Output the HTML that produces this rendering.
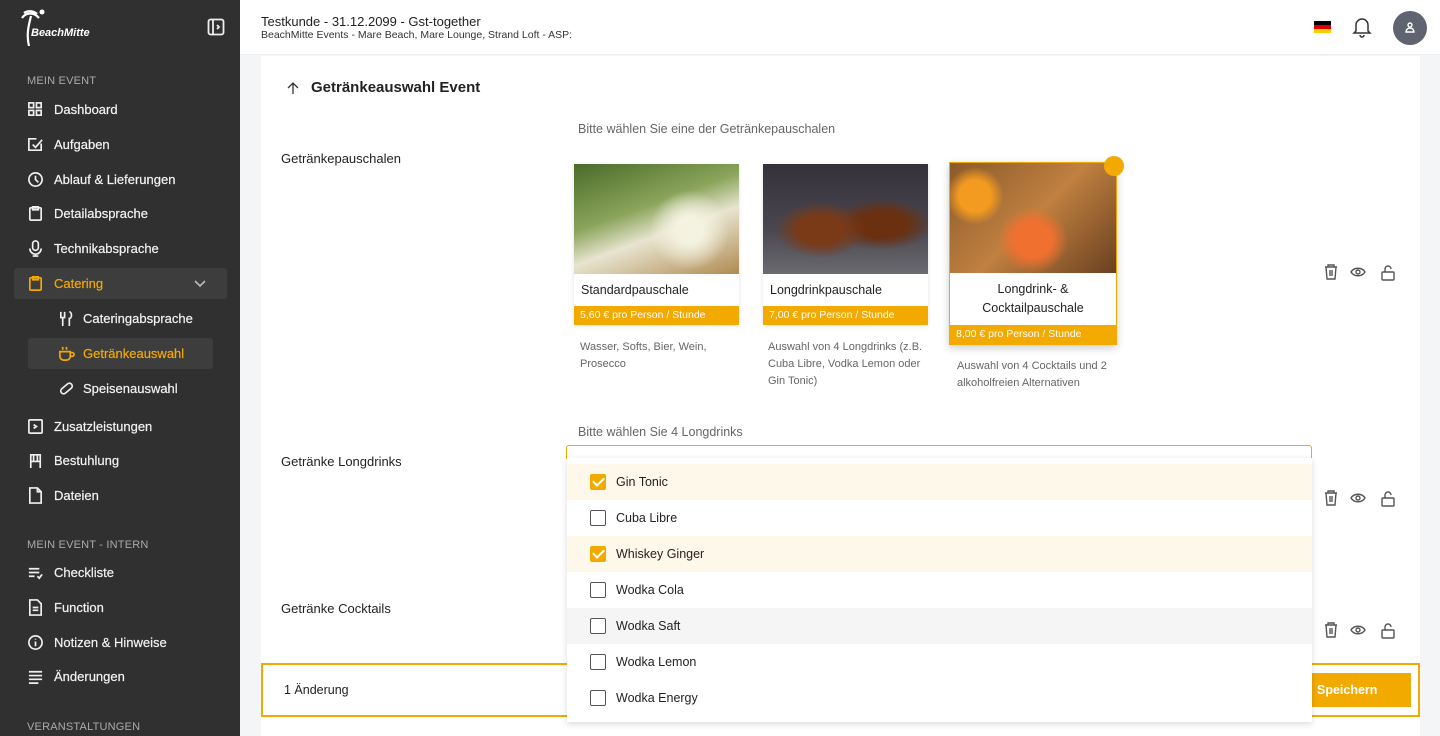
<!DOCTYPE html>
<html><head><meta charset="utf-8"><style>
*{box-sizing:border-box;margin:0;padding:0}
body{width:1440px;height:736px;overflow:hidden;background:#f3f5f7;font-family:"Liberation Sans",sans-serif;position:relative;color:#222}
.a{position:absolute}
#sb{left:0;top:0;width:240px;height:736px;background:#303030;color:#eee}
.sec{font-size:11px;color:#aaa;left:27px;letter-spacing:.2px}
.it{left:27px;font-size:13px;color:#f2f2f2;display:flex;align-items:center;gap:10px;-webkit-text-stroke:.2px #f2f2f2}
.it svg{width:17px;height:17px;stroke:#eee;fill:none;stroke-width:1.8}
.sub{left:58px;gap:8px}
#hd{left:240px;top:0;width:1200px;height:55px;background:#fff;border-bottom:1px solid #eee}
#card{left:261px;top:56px;width:1159px;height:680px;background:#fff}
.lbl{font-size:13px;color:#222}
.hint{font-size:12.5px;color:#666}
.pk{background:#fff;box-shadow:0 1px 4px rgba(0,0,0,.12)}
.pk .img{width:100%;height:110px}
.pk .t{font-size:12.5px;padding:0 7px;display:flex;align-items:center;height:32px}
.pk .p{background:#f2a900;color:#fff;font-size:10.5px;padding:0 6px;height:19px;line-height:19px}
.desc{font-size:11px;color:#666;line-height:17px}
.ico{stroke:#555;fill:none;stroke-width:1.4}
#dd{left:567px;top:458px;width:745px;height:264px;background:#fff;box-shadow:0 2px 6px rgba(0,0,0,.15)}
.row{height:36px;display:flex;align-items:center;padding-left:23px;font-size:12.5px;gap:10px}
.cb{width:16px;height:16px;border:1.5px solid #555;border-radius:2px;background:#fff}
.cb.on{background:#f2a900;border-color:#f2a900;position:relative}
.cb.on:after{content:"";position:absolute;left:4px;top:0px;width:5px;height:9px;border:solid #fff;border-width:0 2px 2px 0;transform:rotate(45deg)}
</style></head><body>
<div id="sb" class="a">
<div class="a" style="left:20px;top:8px;color:#fff;font-style:italic;font-weight:bold;font-size:11px"><svg width="26" height="38" viewBox="0 0 26 38" style="position:absolute;left:0;top:0" fill="none" stroke="#fff" stroke-width="2.2"><path d="M9 38 C6 26 9 16 11 8 M2 10 C6 4 14 4 19 10 M4 5 C8 2 14 3 17 6"/><circle cx="22" cy="4" r="2.5" fill="#fff" stroke="none"/></svg><span style="position:absolute;left:11px;top:19px;white-space:nowrap">BeachMitte</span></div>
<svg class="a" style="left:207px;top:18px" width="18" height="18" viewBox="0 0 18 18" fill="none" stroke="#eee" stroke-width="1.8"><rect x="1.5" y="1.5" width="15" height="15" rx="2"/><path d="M6 2v14M10 7l2 2-2 2"/></svg>
<div class="a sec" style="top:75px">MEIN EVENT</div>
<div class="a it" style="top:101px"><svg viewBox="0 0 18 18"><rect x="2" y="2" width="5" height="5"/><rect x="10" y="2" width="5" height="5"/><rect x="2" y="10" width="5" height="5"/><rect x="10" y="10" width="5" height="5"/></svg>Dashboard</div>
<div class="a it" style="top:136px"><svg viewBox="0 0 18 18"><path d="M15 8v7H2V3h8M6 9l3 3 7-8"/></svg>Aufgaben</div>
<div class="a it" style="top:171px"><svg viewBox="0 0 18 18"><circle cx="9" cy="9" r="7"/><path d="M9 5v4l3 3"/></svg>Ablauf &amp; Lieferungen</div>
<div class="a it" style="top:205px"><svg viewBox="0 0 18 18"><rect x="3" y="3" width="12" height="13" rx="1"/><path d="M6 2h6v3H6z"/></svg>Detailabsprache</div>
<div class="a it" style="top:240px"><svg viewBox="0 0 18 18"><rect x="6" y="1" width="6" height="10" rx="3"/><path d="M3 9a6 6 0 0012 0M9 15v2M6 17h6"/></svg>Technikabsprache</div>
<div class="a" style="left:14px;top:268px;width:213px;height:31px;background:#3d3d3d;border-radius:3px"></div>
<div class="a it" style="top:275px;color:#f2a900;-webkit-text-stroke:.2px #f2a900"><svg viewBox="0 0 18 18" style="stroke:#f2a900"><rect x="3" y="3" width="12" height="13" rx="1"/><path d="M6 2h6v3H6z"/></svg>Catering</div>
<svg class="a" style="left:194px;top:278px" width="12" height="10" viewBox="0 0 12 10" fill="none" stroke="#bbb" stroke-width="1.6"><path d="M1 3l5 5 5-5"/></svg>
<div class="a it sub" style="top:310px"><svg viewBox="0 0 18 18"><path d="M3 2v6h4V2M5 8v9M12 2c3 0 3 7 0 7v8"/></svg>Cateringabsprache</div>
<div class="a" style="left:28px;top:338px;width:185px;height:31px;background:#3d3d3d;border-radius:3px"></div>
<div class="a it sub" style="top:345px;color:#f2a900;-webkit-text-stroke:.2px #f2a900"><svg viewBox="0 0 18 18" style="stroke:#f2a900"><path d="M2 7h11v5a4 4 0 01-4 4H6a4 4 0 01-4-4zM13 8h2a2 2 0 010 4h-2M5 2v3M9 2v3"/></svg>Getränkeauswahl</div>
<div class="a it sub" style="top:380px"><svg viewBox="0 0 18 18"><rect x="2" y="6" width="14" height="6" rx="3" transform="rotate(-40 9 9)"/></svg>Speisenauswahl</div>
<div class="a it" style="top:418px"><svg viewBox="0 0 18 18"><rect x="2" y="2" width="14" height="14" rx="1"/><path d="M7 7l3 2-3 2"/></svg>Zusatzleistungen</div>
<div class="a it" style="top:452px"><svg viewBox="0 0 18 18"><path d="M4 17V3h10v14M4 10h10M7 3v7M11 3v7"/></svg>Bestuhlung</div>
<div class="a it" style="top:487px"><svg viewBox="0 0 18 18"><path d="M3 1h8l4 4v12H3zM11 1v4h4"/></svg>Dateien</div>
<div class="a sec" style="top:539px">MEIN EVENT - INTERN</div>
<div class="a it" style="top:564px"><svg viewBox="0 0 18 18"><path d="M2 5h11M2 9h11M2 13h6M11 13l2 2 3-4"/></svg>Checkliste</div>
<div class="a it" style="top:599px"><svg viewBox="0 0 18 18"><path d="M3 1h8l4 4v12H3zM6 9h6M6 12h6"/></svg>Function</div>
<div class="a it" style="top:634px"><svg viewBox="0 0 18 18"><circle cx="9" cy="9" r="7"/><path d="M9 8v5M9 5v1"/></svg>Notizen &amp; Hinweise</div>
<div class="a it" style="top:668px"><svg viewBox="0 0 18 18"><path d="M2 4h14M2 8h14M2 12h14M2 16h10"/></svg>Änderungen</div>
<div class="a sec" style="top:721px">VERANSTALTUNGEN</div>
</div>
<div id="hd" class="a">
<div class="a" style="left:21px;top:14px;font-size:13px">Testkunde - 31.12.2099 - Gst-together</div>
<div class="a" style="left:21px;top:29px;font-size:10.5px;color:#333">BeachMitte Events - Mare Beach, Mare Lounge, Strand Loft - ASP:</div>
<div class="a" style="left:1074px;top:21px;width:17px;height:12px;background:linear-gradient(#000 33%,#d00 33% 66%,#fc0 66%)"></div>
<svg class="a" style="left:1112px;top:16px" width="20" height="22" viewBox="0 0 20 22" fill="none" stroke="#333" stroke-width="1.5"><path d="M4 15V9a6 6 0 0112 0v6l2 2H2zM8 19a2 2 0 004 0"/></svg>
<div class="a" style="left:1153px;top:11px;width:34px;height:34px;border-radius:50%;background:#5f6470"></div>
<svg class="a" style="left:1164px;top:21px" width="12" height="12" viewBox="0 0 12 12" fill="none" stroke="#fff" stroke-width="1.4"><circle cx="6" cy="4" r="2"/><path d="M2 11a4 4 0 018 0z"/></svg>
</div>
<div id="card" class="a">
<svg class="a" style="left:25px;top:25px" width="14" height="14" viewBox="0 0 14 14" fill="none" stroke="#333" stroke-width="1.3"><path d="M7 13V2M2 7l5-5 5 5"/></svg>
<div class="a" style="left:50px;top:23px;font-size:15px;font-weight:bold;color:#222">Getränkeauswahl Event</div>
<div class="a hint" style="left:317px;top:66px">Bitte wählen Sie eine der Getränkepauschalen</div>
<div class="a lbl" style="left:20px;top:95px">Getränkepauschalen</div>
<div class="a pk" style="left:313px;top:108px;width:165px">
<div class="img" style="background:radial-gradient(circle at 70% 60%,#f4f2e0 10%,transparent 30%),linear-gradient(160deg,#4b6b2a,#8aa45a 40%,#e8e4d0 60%,#b08a50)"></div>
<div class="t">Standardpauschale</div><div class="p">5,60 € pro Person / Stunde</div></div>
<div class="a desc" style="left:319px;top:283px">Wasser, Softs, Bier, Wein,<br>Prosecco</div>
<div class="a pk" style="left:502px;top:108px;width:165px">
<div class="img" style="background:radial-gradient(ellipse at 35% 60%,#7a3a18 15%,transparent 30%),radial-gradient(ellipse at 72% 55%,#6a3010 15%,transparent 30%),linear-gradient(#35313a,#4b4750 60%,#6a6a70)"></div>
<div class="t">Longdrinkpauschale</div><div class="p">7,00 € pro Person / Stunde</div></div>
<div class="a desc" style="left:507px;top:283px">Auswahl von 4 Longdrinks (z.B.<br>Cuba Libre, Vodka Lemon oder<br>Gin Tonic)</div>
<div class="a pk" style="left:688px;top:106px;width:168px;border:1.5px solid #f2a900;box-shadow:0 3px 8px rgba(0,0,0,.2)">
<div class="img" style="background:radial-gradient(circle at 15% 30%,#f39a20 10%,transparent 18%),radial-gradient(ellipse at 50% 70%,#f07030 16%,transparent 30%),linear-gradient(135deg,#8a5a2a,#c08040 50%,#6a4020)"></div>
<div class="t" style="justify-content:center;text-align:center;height:52px;line-height:19px">Longdrink- &amp;<br>Cocktailpauschale</div><div class="p">8,00 € pro Person / Stunde</div></div>
<div class="a" style="left:843px;top:100px;width:20px;height:20px;border-radius:50%;background:#f2a900"></div>
<div class="a desc" style="left:696px;top:302px">Auswahl von 4 Cocktails und 2<br>alkoholfreien Alternativen</div>
<div class="a hint" style="left:317px;top:369px">Bitte wählen Sie 4 Longdrinks</div>
<div class="a" style="left:305px;top:389px;width:746px;height:14px;border:1.5px solid #f2a900;border-bottom:none;border-radius:3px 3px 0 0"></div>
<div class="a lbl" style="left:20px;top:398px">Getränke Longdrinks</div>
<div class="a lbl" style="left:20px;top:545px">Getränke Cocktails</div>
<div class="a" style="left:0;top:607px;width:1159px;height:54px;border:2px solid #f2a900;background:#fff"></div>
<div class="a" style="left:23px;top:627px;font-size:12.5px">1 Änderung</div>
<div class="a" style="left:1044px;top:617px;width:106px;height:34px;background:#f2a900;color:#fff;font-weight:bold;font-size:12.5px;line-height:34px;padding-left:12px">Speichern</div>
</div>
<svg class="a" style="left:1322px;top:262px" width="76" height="20" viewBox="0 0 76 20"><g class="ico"><path d="M3 5h12M6 5V3h6v2M4 5l1 12h8l1-12M8 8v6M10 8v6"/><path d="M29 10c3-5 11-5 14 0-3 5-11 5-14 0z"/><circle cx="36" cy="10" r="2"/><rect x="60" y="10" width="12" height="8" rx="1"/><path d="M63 10V7a3 3 0 016 0"/></g></svg>
<svg class="a" style="left:1322px;top:488px" width="76" height="20" viewBox="0 0 76 20"><g class="ico"><path d="M3 5h12M6 5V3h6v2M4 5l1 12h8l1-12M8 8v6M10 8v6"/><path d="M29 10c3-5 11-5 14 0-3 5-11 5-14 0z"/><circle cx="36" cy="10" r="2"/><rect x="60" y="10" width="12" height="8" rx="1"/><path d="M63 10V7a3 3 0 016 0"/></g></svg>
<svg class="a" style="left:1322px;top:620px" width="76" height="20" viewBox="0 0 76 20"><g class="ico"><path d="M3 5h12M6 5V3h6v2M4 5l1 12h8l1-12M8 8v6M10 8v6"/><path d="M29 10c3-5 11-5 14 0-3 5-11 5-14 0z"/><circle cx="36" cy="10" r="2"/><rect x="60" y="10" width="12" height="8" rx="1"/><path d="M63 10V7a3 3 0 016 0"/></g></svg>
<div id="dd" class="a" style="padding-top:6px">
<div class="row" style="background:#fef8ea"><div class="cb on"></div>Gin Tonic</div>
<div class="row"><div class="cb"></div>Cuba Libre</div>
<div class="row" style="background:#fef8ea"><div class="cb on"></div>Whiskey Ginger</div>
<div class="row"><div class="cb"></div>Wodka Cola</div>
<div class="row" style="background:#f5f5f5"><div class="cb"></div>Wodka Saft</div>
<div class="row"><div class="cb"></div>Wodka Lemon</div>
<div class="row"><div class="cb"></div>Wodka Energy</div>
</div>
</body></html>
